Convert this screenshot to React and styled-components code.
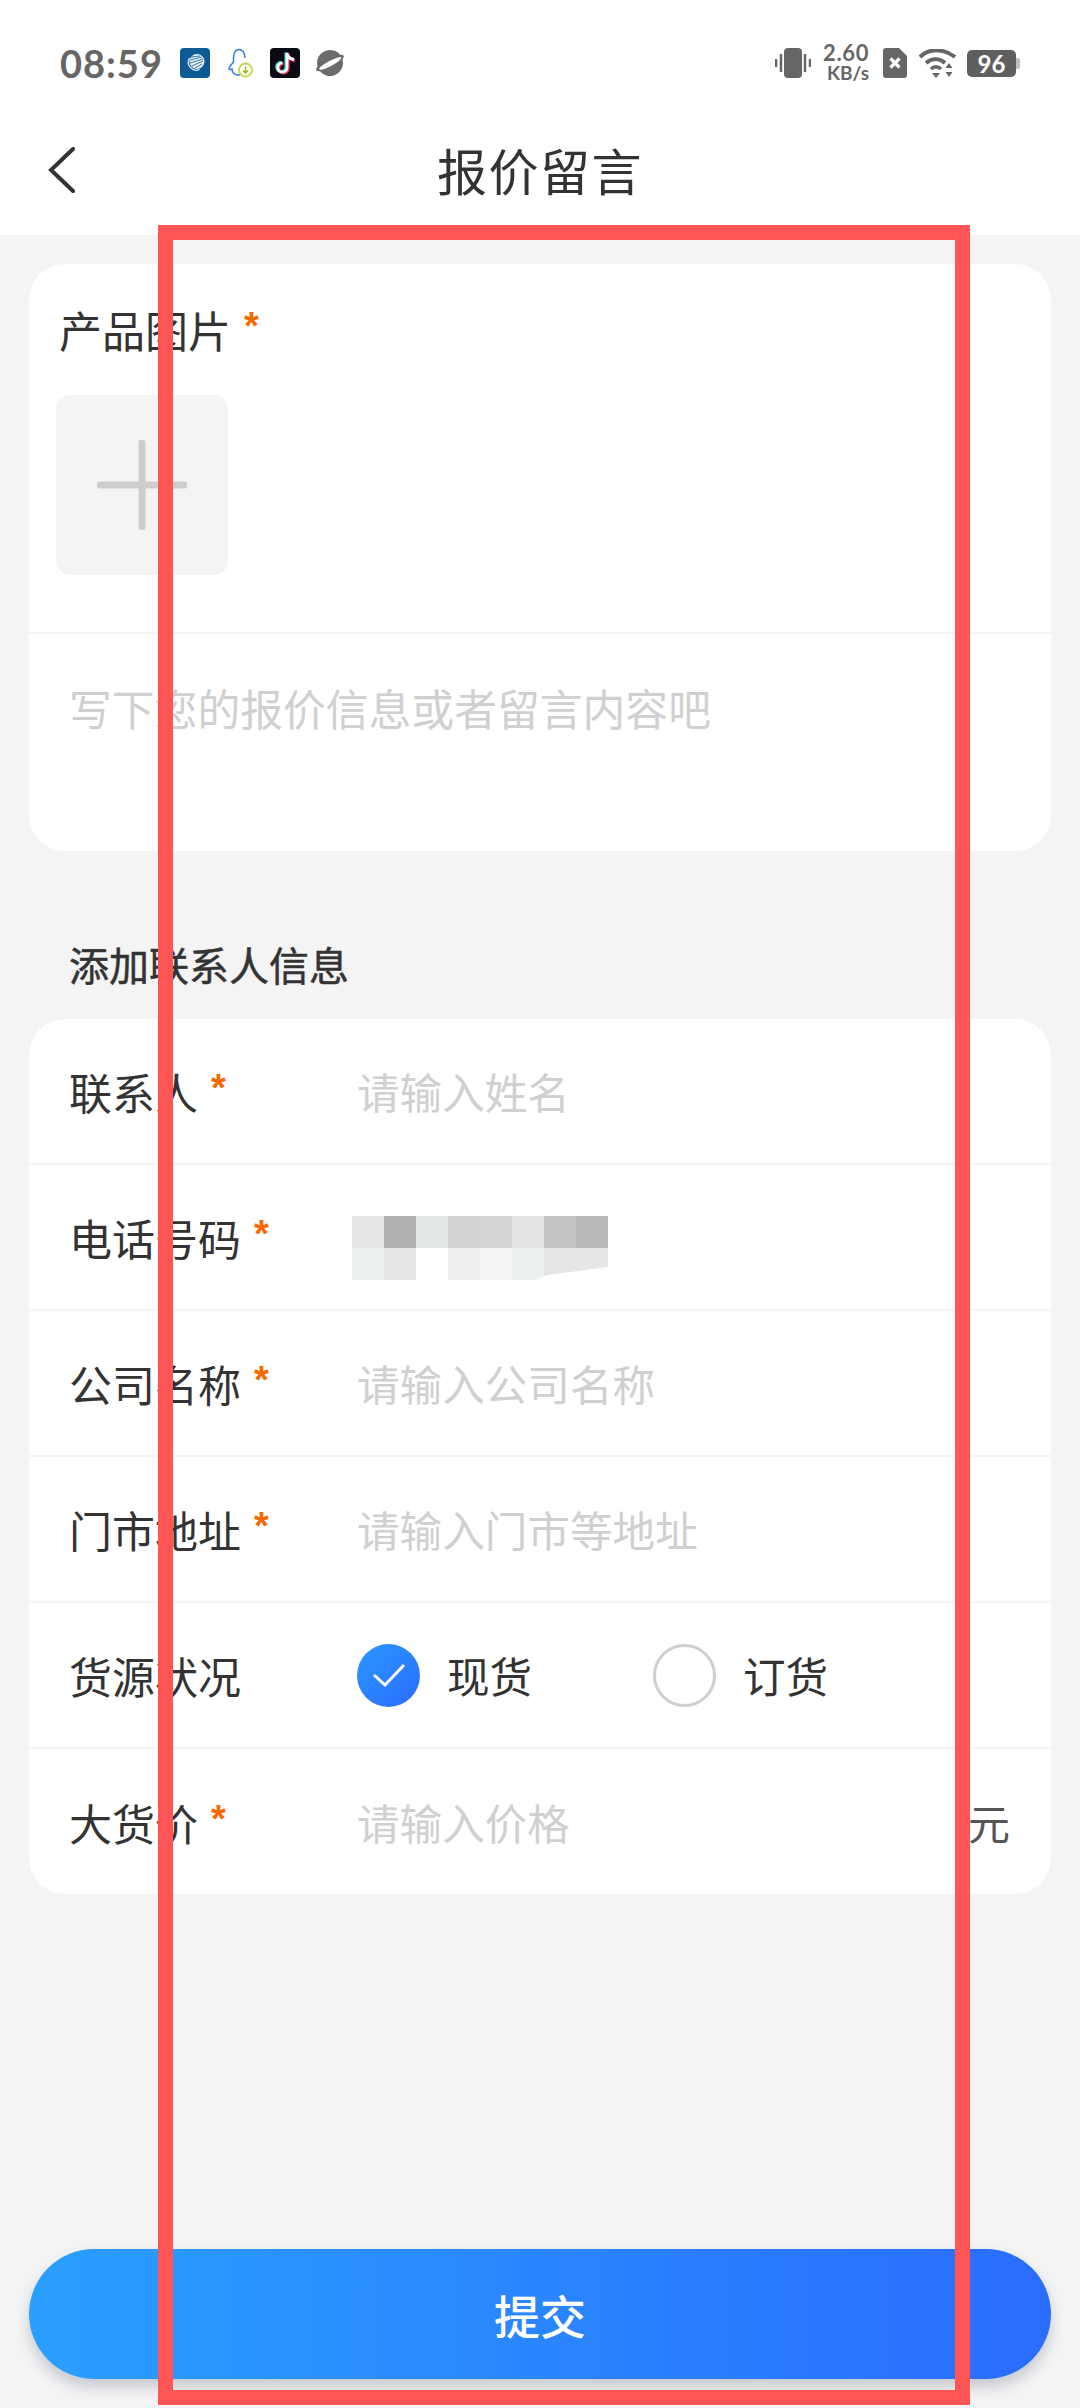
import React from 'react'
import styled, { createGlobalStyle } from 'styled-components'

const GlobalStyle = createGlobalStyle`
  * {
    box-sizing: border-box;
  }

  html, body {
    margin: 0;
    padding: 0;
    background: #f4f4f5;
    font-family: "Noto Sans CJK SC", "Noto Sans", sans-serif;
  }
`

const Page = styled.div`
  position: relative;
  display: flex;
  flex-direction: column;
  width: 1080px;
  height: 2408px;
  overflow: hidden;
  background: #f4f4f5;
  color: #333;
`

const Header = styled.header`
  display: flex;
  flex-direction: column;
  height: 235px;
  background: #fff;
`

const StatusBar = styled.div`
  display: flex;
  align-items: center;
  justify-content: space-between;
  height: 126px;
  padding: 0 60px;
  color: #666;
`

const StatusGroup = styled.div`
  display: flex;
  align-items: center;
`

const Clock = styled.span`
  width: 120px;
  font-family: Lato, "Open Sans", sans-serif;
  font-size: 38px;
  font-weight: 700;
  letter-spacing: 1px;
  line-height: 1;
`

const Speed = styled.div`
  display: flex;
  flex-direction: column;
  align-items: flex-end;
  width: 46px;
  margin: 0 14px 0 12px;
  font-family: Lato, "Open Sans", sans-serif;
  font-weight: 700;
`

const SpeedValue = styled.div`
  height: 20px;
  font-size: 22px;
  line-height: 20px;
  letter-spacing: 0.6px;
`

const SpeedUnit = styled.div`
  height: 20px;
  font-size: 19px;
  line-height: 20px;
  white-space: nowrap;
`

const Battery = styled.div`
  position: relative;
  width: 49px;
  height: 27px;
  margin-right: 4px;
  background: #5f5f5f;
  border-radius: 5px;
  color: #fff;
  font-family: Lato, "Open Sans", sans-serif;
  font-size: 24px;
  font-weight: 700;
  line-height: 27px;
  text-align: center;

  &::after {
    content: '';
    position: absolute;
    right: -4px;
    top: 8px;
    width: 4px;
    height: 11px;
    background: #bdbdbd;
    border-radius: 0 2px 2px 0;
  }
`

const Nav = styled.nav`
  position: relative;
  display: flex;
  align-items: center;
  justify-content: center;
  height: 109px;
  padding-bottom: 24px;
`

const BackIcon = styled.svg`
  position: absolute;
  left: 47px;
  top: 21px;
`

const Title = styled.h1`
  margin: 0;
  font-size: 50px;
  font-weight: 400;
  line-height: 1;
  letter-spacing: 1.5px;
`

const Main = styled.main`
  display: flex;
  flex: 1;
  flex-direction: column;
  padding: 29px 29px 29px;
`

const Card = styled.section`
  background: #fff;
  border-radius: 36px;
`

const UploadPart = styled.div`
  height: 370px;
  padding: 33px 27px 0;
  border-bottom: 2px solid #f4f4f5;
`

const Label = styled.div`
  display: flex;
  align-items: center;
  font-size: 43px;
  line-height: 64px;
  white-space: nowrap;
`

const UploadLabel = styled(Label)`
  padding-left: 3px;
`

const Star = styled.span`
  position: relative;
  top: -3px;
  margin-left: 13px;
  color: #f56a00;
  font-family: "Liberation Sans", sans-serif;
  font-size: 38px;
  font-weight: 700;
`

const UploadBox = styled.div`
  display: flex;
  align-items: center;
  justify-content: center;
  width: 172px;
  height: 180px;
  margin-top: 34px;
  background: #f4f4f5;
  border-radius: 14px;
`

const Message = styled.textarea`
  display: block;
  width: 100%;
  height: 217px;
  padding: 41px 40px 0;
  border: 0;
  outline: 0;
  resize: none;
  background: transparent;
  border-radius: 0 0 36px 36px;
  font: 400 42.8px/64px "Noto Sans CJK SC", sans-serif;

  &::placeholder {
    color: #d0d0d0;
    opacity: 1;
  }
`

const SectionTitle = styled.h2`
  margin: 0;
  padding: 84px 40px 26px;
  font-size: 40px;
  font-weight: 400;
  line-height: 58px;
  -webkit-text-stroke: 0.5px #333;
`

const Row = styled.div`
  display: flex;
  align-items: center;
  height: ${p => (p.$last ? 145 : 146)}px;
  padding: 0 41px 0 40px;
  border-bottom: ${p => (p.$last ? 0 : '2px solid #f4f4f5')};
`

const RowLabel = styled(Label)`
  flex: none;
  width: 288px;
`

const RowInput = styled.input`
  flex: 1;
  min-width: 0;
  padding: 0;
  border: 0;
  outline: 0;
  background: transparent;
  font: 400 42.6px/64px "Noto Sans CJK SC", sans-serif;

  &::placeholder {
    color: #d0d0d0;
    opacity: 1;
  }
`

const Mosaic = styled.div`
  position: relative;
  display: grid;
  grid-template-columns: repeat(8, 32px);
  grid-auto-rows: 32px;
  margin: 22px 0 0 -5px;
`

const MosaicCell = styled.i`
  display: block;
  background: ${p => p.$color};
`

const MosaicSmear = styled.svg`
  position: absolute;
  left: 0;
  top: 0;
`

const RadioGroup = styled.div`
  display: flex;
`

const RadioOption = styled.div`
  display: flex;
  align-items: center;
  gap: 27px;
  width: 296px;
  font-size: 42.6px;
  line-height: 64px;
`

const RadioMark = styled.span`
  display: flex;
  align-items: center;
  justify-content: center;
  width: 63px;
  height: 63px;
  border-radius: 50%;
  border: ${p => (p.$checked ? 0 : '3px solid #cfcfcf')};
  background: ${p => (p.$checked ? 'linear-gradient(135deg, #2a98ff, #2a6cff)' : '#fff')};
`

const Unit = styled.span`
  font-size: 42px;
  color: #555;
`

const SubmitButton = styled.button`
  display: block;
  width: 100%;
  height: 130px;
  margin-top: auto;
  border: 0;
  border-radius: 65px;
  background: linear-gradient(90deg, #2a9fff, #2a6cff);
  box-shadow: 0 8px 14px rgba(60, 70, 90, 0.25);
  color: #fff;
  font: 500 46px "Noto Sans CJK SC", sans-serif;
`

// the red marker somebody drew over the screenshot
const RedFrame = styled.div`
  position: absolute;
  left: 158px;
  top: 225px;
  width: 812px;
  height: 2180px;
  border: 15px solid #ff5555;
  pointer-events: none;
`

const AppIcon = styled.svg`
  display: block;
  margin-right: ${p => p.$gap}px;
`

const mosaic = [
  '#e5e5e5', '#b2b0b2', '#e5e9e6', '#d3d1d4', '#d6d6d6', '#e5e2e5', '#c4c4c4', '#bababa',
  '#edf1ee', '#e6e6e6', '#ffffff', '#eeeeee', '#f5f5f5', '#edf1ee', '#e6e6e6', '#e7e7e7'
]

const contacts = [
  { label: '联系人', required: true, placeholder: '请输入姓名' },
  { label: '电话号码', required: true, phone: true },
  { label: '公司名称', required: true, placeholder: '请输入公司名称' },
  { label: '门市地址', required: true, placeholder: '请输入门市等地址' },
  { label: '货源状况', radio: true },
  { label: '大货价', required: true, placeholder: '请输入价格', unit: '元' }
]

const noteShape = 'M17 5v14.5a4.6 4.6 0 1 1-4.600-4.600M17 5c.4 3.500 3 6 7 6.500'

const LeftIcons = () => (
  <StatusGroup>
    <Clock>08:59</Clock>
    <AppIcon $gap={17} width="30" height="30" viewBox="0 0 30 30">
      <rect width="30" height="30" rx="4" fill="#0c5b94" />
      <circle cx="17" cy="13.500" r="7.500" fill="#e4eef5" />
      <path d="M11 9l9-1M10 12l12-3M10 15l13-4M12 18l11-5M15 20l7-4" stroke="#0c5b94" strokeWidth="0.800" />
      <path d="M9.500 10a8 8 0 0 0 10 11.500" fill="none" stroke="#e4eef5" strokeWidth="1.300" />
    </AppIcon>
    <AppIcon $gap={17} width="26" height="30" viewBox="0 0 26 30">
      <path d="M6.500 14C6 6 8 1.500 12 1.500c3.500 0 5.500 3 6 8.500M6.500 14C4 17 1.500 19.500 2 21c.5 1 2 .5 3 0 0 2.500 1.500 5 5 6h3" fill="none" stroke="#2f7fe0" strokeWidth="1.500" />
      <circle cx="18.500" cy="22" r="6.500" fill="#fff" stroke="#c3d94f" strokeWidth="2" />
      <path d="M18.500 18.500v6M16 22.500l2.500 2.500 2.500-2.500" fill="none" stroke="#9dbd33" strokeWidth="1.600" />
    </AppIcon>
    <AppIcon $gap={15} width="30" height="30" viewBox="0 0 30 30">
      <rect width="30" height="30" rx="4" fill="#0b0b14" />
      <path d={noteShape} fill="none" stroke="#25e0e4" strokeWidth="3.200" transform="translate(-1 -.5)" />
      <path d={noteShape} fill="none" stroke="#fe2c55" strokeWidth="3.200" transform="translate(1 .8)" />
      <path d={noteShape} fill="none" stroke="#fff" strokeWidth="2.800" />
    </AppIcon>
    <AppIcon $gap={0} width="30" height="28" viewBox="0 0 30 28">
      <g transform="rotate(-28 15 14)">
        <ellipse cx="15" cy="14" rx="15.500" ry="4.500" fill="#6b6b6b" />
        <circle cx="15" cy="14" r="13" fill="#6b6b6b" />
        <ellipse cx="15" cy="14.500" rx="12.500" ry="2.600" fill="#fff" />
      </g>
    </AppIcon>
  </StatusGroup>
)

const RightIcons = () => (
  <StatusGroup>
    <AppIcon $gap={0} width="36" height="30" viewBox="0 0 36 30">
      <rect x="9" y="0" width="18" height="30" rx="4" fill="#666" />
      <path d="M1 11v8M6 6v18M30 6v18M35 11v8" stroke="#666" strokeWidth="2.500" />
    </AppIcon>
    <Speed>
      <SpeedValue>2.60</SpeedValue>
      <SpeedUnit>KB/s</SpeedUnit>
    </Speed>
    <AppIcon $gap={12} width="24" height="30" viewBox="0 0 24 30">
      <path d="M3 0h13l8 8v19a3 3 0 0 1-3 3H3a3 3 0 0 1-3-3V3a3 3 0 0 1 3-3z" fill="#666" />
      <path d="M7.500 10.500l9 9M16.500 10.500l-9 9" stroke="#fff" strokeWidth="3.200" />
    </AppIcon>
    <AppIcon $gap={11} width="37" height="29" viewBox="0 0 37 29">
      <path d="M1 8C10-1 24-1 36 8" fill="none" stroke="#666" strokeWidth="4" />
      <path d="M7 14c6-5 13-5 19 0" fill="none" stroke="#666" strokeWidth="4" />
      <path d="M12 20c3-3 7-3 10 0" fill="none" stroke="#666" strokeWidth="3.500" />
      <path d="M13 24h8l-4 5zM30 14l3.500 5h-7zM26.500 23h7l-3.500 5z" fill="#666" />
    </AppIcon>
    <Battery>96</Battery>
  </StatusGroup>
)

const ContactRow = ({ item, last }) => (
  <Row $last={last}>
    <RowLabel>
      {item.label}
      {item.required && <Star>*</Star>}
    </RowLabel>
    {item.placeholder && <RowInput placeholder={item.placeholder} />}
    {item.unit && <Unit>{item.unit}</Unit>}
    {item.phone && (
      <Mosaic>
        {mosaic.map((color, i) => <MosaicCell key={i} $color={color} />)}
        <MosaicSmear width="256" height="64" viewBox="0 0 256 64">
          <path d="M184 64l11-5q16-2 61-8v13z" fill="#fff" />
        </MosaicSmear>
      </Mosaic>
    )}
    {item.radio && (
      <RadioGroup>
        <RadioOption>
          <RadioMark $checked>
            <svg width="34" height="26" viewBox="0 0 34 26">
              <path d="M2 13l11 10L32 3" fill="none" stroke="#fff" strokeWidth="3" />
            </svg>
          </RadioMark>
          现货
        </RadioOption>
        <RadioOption>
          <RadioMark />
          订货
        </RadioOption>
      </RadioGroup>
    )}
  </Row>
)

const App = () => (
  <Page>
    <GlobalStyle />
    <Header>
      <StatusBar>
        <LeftIcons />
        <RightIcons />
      </StatusBar>
      <Nav>
        <BackIcon width="30" height="46" viewBox="0 0 30 46">
          <path d="M26 2L4 23l22 21" fill="none" stroke="#333" strokeWidth="4" strokeLinecap="round" />
        </BackIcon>
        <Title>报价留言</Title>
      </Nav>
    </Header>
    <Main>
      <Card>
        <UploadPart>
          <UploadLabel>
            产品图片
            <Star>*</Star>
          </UploadLabel>
          <UploadBox>
            <svg width="90" height="90" viewBox="0 0 90 90">
              <path d="M45 3v84M3 45h84" stroke="#cdcdcd" strokeWidth="7" strokeLinecap="round" />
            </svg>
          </UploadBox>
        </UploadPart>
        <Message placeholder="写下您的报价信息或者留言内容吧" />
      </Card>
      <SectionTitle>添加联系人信息</SectionTitle>
      <Card>
        {contacts.map((item, i) => (
          <ContactRow key={item.label} item={item} last={i === contacts.length - 1} />
        ))}
      </Card>
      <SubmitButton>提交</SubmitButton>
    </Main>
    <RedFrame />
  </Page>
)

export default App
